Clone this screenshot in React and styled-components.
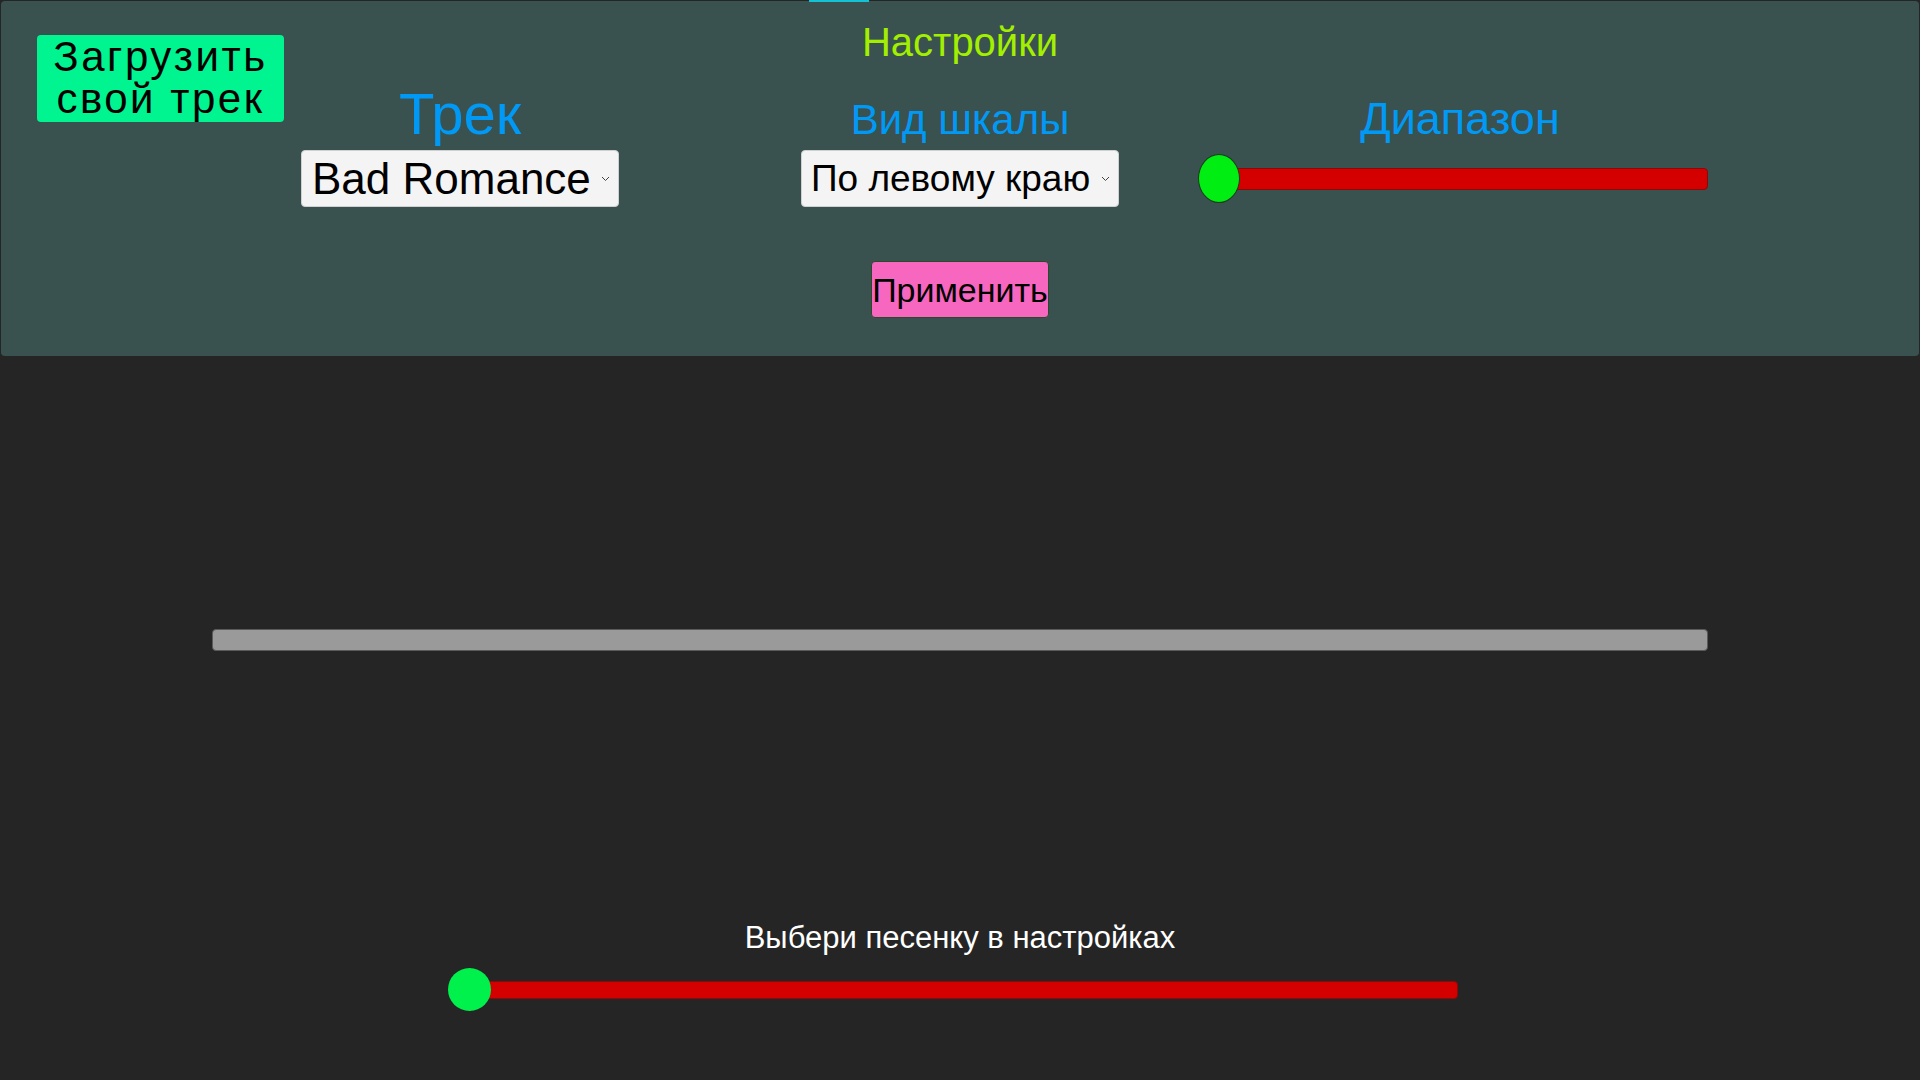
import React from "react";
import styled, { createGlobalStyle } from "styled-components";

const font = `"Liberation Sans", Arial, sans-serif`;

const GlobalStyle = createGlobalStyle`
  html, body {
    margin: 0;
    padding: 0;
    background: #252525;
  }
  body {
    font-family: ${font};
  }
  * {
    box-sizing: border-box;
  }
`;

const Page = styled.div`
  width: 1920px;
  height: 1080px;
  overflow: hidden;
  display: flex;
  flex-direction: column;
`;

const Settings = styled.header`
  position: relative;
  margin: 1px;
  height: 355px;
  background: #395250;
  border-radius: 4px;
  display: grid;
  grid-template-columns: minmax(0, 1fr) 1500px minmax(0, 1fr);
`;

const TopTab = styled.span`
  position: absolute;
  top: -1px;
  left: 808px;
  width: 60px;
  height: 2px;
  background: #14c3d3;
`;

const UploadButton = styled.button`
  justify-self: start;
  align-self: start;
  margin: 34px 0 0 36px;
  width: 247px;
  height: 87px;
  padding: 0 0 2px;
  border: none;
  border-radius: 4px;
  background: #00f590;
  color: #000;
  font-family: ${font};
  font-size: 42px;
  line-height: 42px;
  letter-spacing: 2.5px;
  text-align: center;
  white-space: nowrap;
`;

const Center = styled.div`
  display: flex;
  flex-direction: column;
  align-items: center;
  padding-top: 21px;
`;

const Title = styled.h1`
  margin: 0;
  font-family: ${font};
  font-weight: 400;
  font-size: 40px;
  line-height: 1;
  color: #a3ef00;
`;

const Row = styled.div`
  margin-top: 23px;
  display: grid;
  grid-template-columns: repeat(3, 500px);
  grid-template-rows: auto 57px;
  row-gap: 7px;
  align-items: baseline;
`;

const Label = styled.h2`
  margin: 0;
  justify-self: center;
  font-family: ${font};
  font-weight: 400;
  font-size: ${(p) => p.$size}px;
  line-height: 1;
  color: #0099f5;
`;

const Cell = styled.div`
  align-self: center;
  justify-self: center;
  display: flex;
  align-items: center;
`;

const SelectBox = styled.div`
  position: relative;
  width: 318px;
  height: 57px;
`;

const Select = styled.select`
  appearance: none;
  width: 100%;
  height: 100%;
  padding: 0 0 0 ${(p) => p.$pad}px;
  border: 1px solid #d0d0d0;
  border-radius: 4px;
  background: #f4f4f4;
  color: #000;
  font-family: ${font};
  font-size: ${(p) => p.$size}px;
  outline: none;
`;

const Chevron = styled.svg`
  position: absolute;
  right: 9px;
  top: 26px;
  width: 9px;
  height: 6px;
  pointer-events: none;
`;

const Slider = styled.div`
  width: ${(p) => p.$width}px;
  margin-left: -14px;
  display: flex;
  align-items: center;
`;

const Thumb = styled.span`
  position: relative;
  z-index: 1;
  flex: none;
  width: ${(p) => p.$w}px;
  height: ${(p) => p.$h}px;
  border-radius: 50%;
  background: ${(p) => p.$color};
  border: ${(p) => (p.$border ? "1px solid #1d3a1d" : "none")};
`;

const Track = styled.span`
  flex: 1;
  height: ${(p) => p.$h}px;
  margin-left: -6px;
  background: #d40000;
  border: 1px solid #8a0a0a;
  border-radius: 4px;
`;

const ApplyButton = styled.button`
  margin-top: 54px;
  width: 178px;
  height: 57px;
  padding: 0;
  border: 1px solid #2a4a2a;
  border-radius: 4px;
  background: #f766bf;
  color: #000;
  font-family: ${font};
  font-size: 34px;
  line-height: 1;
  white-space: nowrap;
`;

const Player = styled.main`
  flex: 1;
  display: flex;
  flex-direction: column;
  align-items: center;
  padding-top: 272px;
`;

const Progress = styled.div`
  width: 1496px;
  height: 22px;
  background: #9a9a9a;
  border: 1px solid #5a5a5a;
  border-radius: 4px;
`;

const Caption = styled.p`
  margin: 271px 0 0;
  font-family: ${font};
  font-size: 31px;
  line-height: 1;
  color: #fff;
`;

const BottomSlider = styled(Slider)`
  margin-top: 15px;
`;

function SelectField({ value, options, size, pad }) {
  return (
    <SelectBox>
      <Select defaultValue={value} $size={size} $pad={pad}>
        {options.map((o) => (
          <option key={o}>{o}</option>
        ))}
      </Select>
      <Chevron viewBox="0 0 9 6">
        <path d="M1 1l3.5 3.5L8 1" fill="none" stroke="#444" strokeWidth="1" />
      </Chevron>
    </SelectBox>
  );
}

export default function App() {
  return (
    <>
      <GlobalStyle />
      <Page>
        <Settings>
          <TopTab />
          <UploadButton>
            Загрузить
            <br />
            свой трек
          </UploadButton>

          <Center>
            <Title>Настройки</Title>
            <Row>
              <Label $size={58}>Трек</Label>
              <Label $size={42}>Вид шкалы</Label>
              <Label $size={45}>Диапазон</Label>

              <Cell>
                <SelectField
                  value="Bad Romance"
                  options={["Bad Romance", "Poker Face", "Alejandro"]}
                  size={44}
                  pad={10}
                />
              </Cell>
              <Cell>
                <SelectField
                  value="По левому краю"
                  options={["По левому краю", "По центру", "По правому краю"]}
                  size={37}
                  pad={9}
                />
              </Cell>
              <Cell>
                <Slider $width={510}>
                  <Thumb $w={42} $h={49} $color="#00ee11" $border />
                  <Track $h={22} />
                </Slider>
              </Cell>
            </Row>
            <ApplyButton>Применить</ApplyButton>
          </Center>
          <div />
        </Settings>

        <Player>
          <Progress />
          <Caption>Выбери песенку в настройках</Caption>
          <BottomSlider $width={1010}>
            <Thumb $w={43} $h={43} $color="#00f04c" />
            <Track $h={18} />
          </BottomSlider>
        </Player>
      </Page>
    </>
  );
}
